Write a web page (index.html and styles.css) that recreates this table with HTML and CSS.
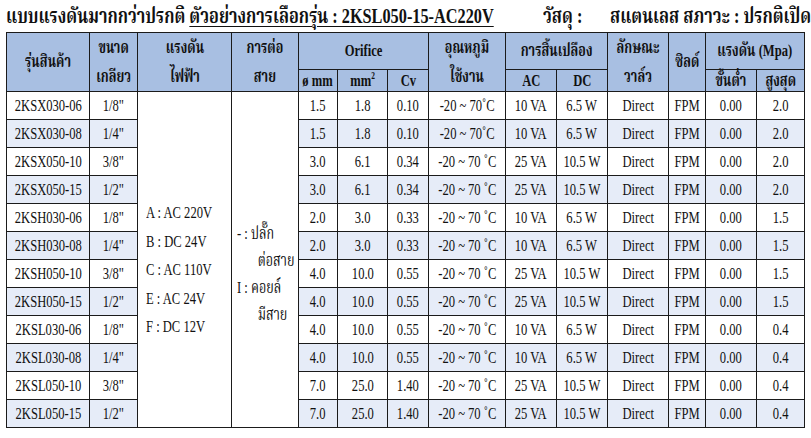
FILE: index.html
```html
<!DOCTYPE html>
<html lang="th">
<head>
<meta charset="utf-8">
<link rel="stylesheet" href="styles.css">
</head>
<body>
<div class="title">
  <div class="tl"><span class="c">แบบแรงดันมากกว่าปรกติ <u>ตัวอย่างการเลือกรุ่น : 2KSL050-15-AC220V</u></span></div>
  <div class="tr">
    <div class="k"><span class="c">วัสดุ :</span></div>
    <div class="v"><span class="c">สแตนเลส สภาวะ : ปรกติเปิด</span></div>
  </div>
</div>
<table class="spec">
<colgroup>
<col style="width:83px"><col style="width:48px"><col style="width:94px"><col style="width:67px">
<col style="width:39px"><col style="width:50px"><col style="width:41px"><col style="width:77px">
<col style="width:51px"><col style="width:51px"><col style="width:61px"><col style="width:37px">
<col style="width:51px"><col style="width:48px">
</colgroup>
<thead>
<tr class="h1">
<th rowspan="2"><span class="c">รุ่นสินค้า</span></th>
<th rowspan="2"><span class="c two">ขนาด<br>เกลียว</span></th>
<th rowspan="2"><span class="c two">แรงดัน<br>ไฟฟ้า</span></th>
<th rowspan="2"><span class="c two">การต่อ<br>สาย</span></th>
<th colspan="3"><span class="c">Orifice</span></th>
<th rowspan="2"><span class="c two">อุณหภูมิ<br>ใช้งาน</span></th>
<th colspan="2"><span class="c">การสิ้นเปลือง</span></th>
<th rowspan="2"><span class="c two">ลักษณะ<br>วาล์ว</span></th>
<th rowspan="2"><span class="c">ซิลด์</span></th>
<th colspan="2"><span class="c">แรงดัน (Mpa)</span></th>
</tr>
<tr class="h2">
<th><span class="c">ø mm</span></th>
<th><span class="c">mm<sup>2</sup></span></th>
<th><span class="c">Cv</span></th>
<th><span class="c">AC</span></th>
<th><span class="c">DC</span></th>
<th><span class="c">ขั้นต่ำ</span></th>
<th><span class="c">สูงสุด</span></th>
</tr>
</thead>
<tbody>
<tr>
<td><span class="c">2KSX030-06</span></td><td><span class="c">1/8"</span></td>
<td rowspan="12" class="merge">
  <div class="vlist">
    <div class="c">A : AC 220V</div>
    <div class="c">B : DC 24V</div>
    <div class="c">C : AC 110V</div>
    <div class="c">E : AC 24V</div>
    <div class="c">F : DC 12V</div>
  </div>
</td>
<td rowspan="12" class="merge">
  <div class="wlist">
    <div class="c">- : ปลั๊ก</div>
    <div class="c ind">ต่อสาย</div>
    <div class="c">I : คอยล์</div>
    <div class="c ind">มีสาย</div>
  </div>
</td>
<td><span class="c">1.5</span></td><td><span class="c">1.8</span></td><td><span class="c">0.10</span></td><td><span class="c">-20 ~ 70˚C</span></td><td><span class="c">10 VA</span></td><td><span class="c">6.5 W</span></td><td><span class="c">Direct</span></td><td><span class="c">FPM</span></td><td><span class="c">0.00</span></td><td><span class="c">2.0</span></td>
</tr>
<tr class="alt">
<td><span class="c">2KSX030-08</span></td><td><span class="c">1/4"</span></td>
<td><span class="c">1.5</span></td><td><span class="c">1.8</span></td><td><span class="c">0.10</span></td><td><span class="c">-20 ~ 70˚C</span></td><td><span class="c">10 VA</span></td><td><span class="c">6.5 W</span></td><td><span class="c">Direct</span></td><td><span class="c">FPM</span></td><td><span class="c">0.00</span></td><td><span class="c">2.0</span></td>
</tr>
<tr>
<td><span class="c">2KSX050-10</span></td><td><span class="c">3/8"</span></td>
<td><span class="c">3.0</span></td><td><span class="c">6.1</span></td><td><span class="c">0.34</span></td><td><span class="c">-20 ~ 70 ˚C</span></td><td><span class="c">25 VA</span></td><td><span class="c">10.5 W</span></td><td><span class="c">Direct</span></td><td><span class="c">FPM</span></td><td><span class="c">0.00</span></td><td><span class="c">2.0</span></td>
</tr>
<tr class="alt">
<td><span class="c">2KSX050-15</span></td><td><span class="c">1/2"</span></td>
<td><span class="c">3.0</span></td><td><span class="c">6.1</span></td><td><span class="c">0.34</span></td><td><span class="c">-20 ~ 70 ˚C</span></td><td><span class="c">25 VA</span></td><td><span class="c">10.5 W</span></td><td><span class="c">Direct</span></td><td><span class="c">FPM</span></td><td><span class="c">0.00</span></td><td><span class="c">2.0</span></td>
</tr>
<tr>
<td><span class="c">2KSH030-06</span></td><td><span class="c">1/8"</span></td>
<td><span class="c">2.0</span></td><td><span class="c">3.0</span></td><td><span class="c">0.33</span></td><td><span class="c">-20 ~ 70 ˚C</span></td><td><span class="c">10 VA</span></td><td><span class="c">6.5 W</span></td><td><span class="c">Direct</span></td><td><span class="c">FPM</span></td><td><span class="c">0.00</span></td><td><span class="c">1.5</span></td>
</tr>
<tr class="alt">
<td><span class="c">2KSH030-08</span></td><td><span class="c">1/4"</span></td>
<td><span class="c">2.0</span></td><td><span class="c">3.0</span></td><td><span class="c">0.33</span></td><td><span class="c">-20 ~ 70 ˚C</span></td><td><span class="c">10 VA</span></td><td><span class="c">6.5 W</span></td><td><span class="c">Direct</span></td><td><span class="c">FPM</span></td><td><span class="c">0.00</span></td><td><span class="c">1.5</span></td>
</tr>
<tr>
<td><span class="c">2KSH050-10</span></td><td><span class="c">3/8"</span></td>
<td><span class="c">4.0</span></td><td><span class="c">10.0</span></td><td><span class="c">0.55</span></td><td><span class="c">-20 ~ 70 ˚C</span></td><td><span class="c">25 VA</span></td><td><span class="c">10.5 W</span></td><td><span class="c">Direct</span></td><td><span class="c">FPM</span></td><td><span class="c">0.00</span></td><td><span class="c">1.5</span></td>
</tr>
<tr class="alt">
<td><span class="c">2KSH050-15</span></td><td><span class="c">1/2"</span></td>
<td><span class="c">4.0</span></td><td><span class="c">10.0</span></td><td><span class="c">0.55</span></td><td><span class="c">-20 ~ 70 ˚C</span></td><td><span class="c">25 VA</span></td><td><span class="c">10.5 W</span></td><td><span class="c">Direct</span></td><td><span class="c">FPM</span></td><td><span class="c">0.00</span></td><td><span class="c">1.5</span></td>
</tr>
<tr>
<td><span class="c">2KSL030-06</span></td><td><span class="c">1/8"</span></td>
<td><span class="c">4.0</span></td><td><span class="c">10.0</span></td><td><span class="c">0.55</span></td><td><span class="c">-20 ~ 70 ˚C</span></td><td><span class="c">10 VA</span></td><td><span class="c">6.5 W</span></td><td><span class="c">Direct</span></td><td><span class="c">FPM</span></td><td><span class="c">0.00</span></td><td><span class="c">0.4</span></td>
</tr>
<tr class="alt">
<td><span class="c">2KSL030-08</span></td><td><span class="c">1/4"</span></td>
<td><span class="c">4.0</span></td><td><span class="c">10.0</span></td><td><span class="c">0.55</span></td><td><span class="c">-20 ~ 70 ˚C</span></td><td><span class="c">10 VA</span></td><td><span class="c">6.5 W</span></td><td><span class="c">Direct</span></td><td><span class="c">FPM</span></td><td><span class="c">0.00</span></td><td><span class="c">0.4</span></td>
</tr>
<tr>
<td><span class="c">2KSL050-10</span></td><td><span class="c">3/8"</span></td>
<td><span class="c">7.0</span></td><td><span class="c">25.0</span></td><td><span class="c">1.40</span></td><td><span class="c">-20 ~ 70 ˚C</span></td><td><span class="c">25 VA</span></td><td><span class="c">10.5 W</span></td><td><span class="c">Direct</span></td><td><span class="c">FPM</span></td><td><span class="c">0.00</span></td><td><span class="c">0.4</span></td>
</tr>
<tr class="alt">
<td><span class="c">2KSL050-15</span></td><td><span class="c">1/2"</span></td>
<td><span class="c">7.0</span></td><td><span class="c">25.0</span></td><td><span class="c">1.40</span></td><td><span class="c">-20 ~ 70 ˚C</span></td><td><span class="c">25 VA</span></td><td><span class="c">10.5 W</span></td><td><span class="c">Direct</span></td><td><span class="c">FPM</span></td><td><span class="c">0.00</span></td><td><span class="c">0.4</span></td>
</tr>
</tbody>
</table>
</body>
</html>
```

FILE: styles.css
```css
html, body {
  margin: 0;
  background: #ffffff;
}
body {
  padding: 2px 0 0 6px;
  color: #111111;
  font-family: "Liberation Serif", "Kinnari", "Norasi", "Noto Serif Thai", "Noto Sans Thai", serif;
}
.c {
  display: inline-block;
  transform: scaleX(0.74);
  margin: 0 -24px;
  white-space: nowrap;
}
.title {
  display: flex;
  width: 798px;
  height: 30px;
  font-size: 22px;
  line-height: 28px;
  font-weight: bold;
}
.title .c {
  transform-origin: left center;
  margin: 0;
}
.tl {
  flex: none;
  width: 537px;
  min-width: 0;
}
.tr {
  flex: none;
  display: flex;
}
.tr .k {
  width: 67px;
}
.tr .v .c {
  margin-right: -72px;
}
.title u {
  text-underline-offset: 3px;
  text-decoration-thickness: 1px;
}
.spec {
  border-collapse: collapse;
  table-layout: fixed;
  width: 798px;
  font-size: 17px;
}
.spec th, .spec td {
  border: 1px solid #1b1b1b;
  padding: 0;
  text-align: center;
}
.spec th {
  background: #a8bfe2;
  font-weight: bold;
  line-height: 20px;
}
.spec .h1 th { height: 36px; }
.spec .h2 th { height: 21px; }
.spec .two { line-height: 29px; }
.spec sup { font-size: 10px; line-height: 0; }
.spec td {
  height: 27px;
  line-height: 27px;
  background: #ffffff;
}
.spec tr.alt td { background: #e6ecf8; }
.spec td.merge {
  background: #ffffff;
  text-align: left;
  vertical-align: middle;
}
.vlist, .wlist {
  display: flex;
  flex-direction: column;
}
.vlist .c, .wlist .c {
  transform-origin: left center;
  margin: 0;
}
.vlist { padding: 22px 0 0 8px; line-height: 28.5px; }
.wlist { padding: 28px 0 0 5px; line-height: 27px; }
.wlist .ind { padding-left: 28px; }
```
